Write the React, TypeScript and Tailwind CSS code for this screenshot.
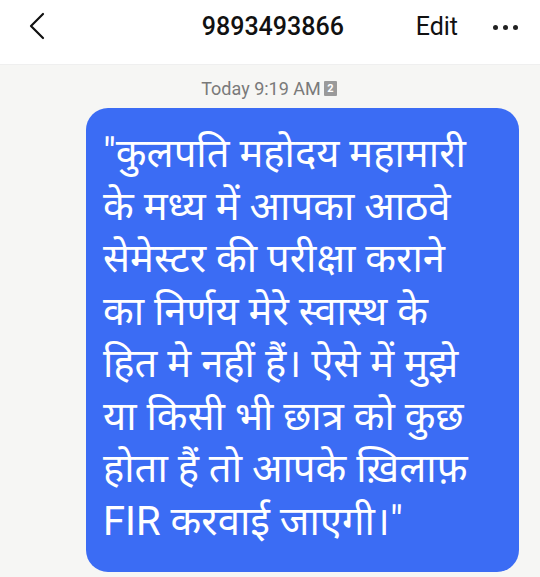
import React from "react";

const lines = [
  "\"कुलपति महोदय महामारी",
  "के मध्य में आपका आठवे",
  "सेमेस्टर की परीक्षा कराने",
  "का निर्णय मेरे स्वास्थ के",
  "हित मे नहीं हैं। ऐसे में मुझे",
  "या किसी भी छात्र को कुछ",
  "होता हैं तो आपके ख़िलाफ़",
  "FIR करवाई जाएगी।\"",
];

export default function App() {
  return (
    <div className="w-[540px] h-[577px] flex flex-col bg-[#f6f6f4] overflow-hidden" style={{ fontFamily: "Roboto, 'Noto Sans', 'Noto Sans Devanagari', sans-serif" }}>
      <div className="h-[65px] bg-white flex items-start pt-[11px] shrink-0 border-b border-[#efefef]">
        <div className="w-[70px] flex justify-center pl-[4px] pt-[1px]">
          <svg width="20" height="28" viewBox="0 0 20 28">
            <path d="M16 2 L4 14 L16 26" fill="none" stroke="#111" strokeWidth="2.2" strokeLinecap="round" strokeLinejoin="round" />
          </svg>
        </div>
        <div className="flex-1 text-center text-[25px] leading-[32px] font-medium text-[#111] pl-[60px]">9893493866</div>
        <div className="text-[25px] leading-[32px] text-[#111] mr-[35px]">Edit</div>
        <div className="flex gap-[5px] mr-[22px] mt-[14px]">
          <span className="w-[5px] h-[5px] rounded-full bg-[#222]" />
          <span className="w-[5px] h-[5px] rounded-full bg-[#222]" />
          <span className="w-[5px] h-[5px] rounded-full bg-[#222]" />
        </div>
      </div>
      <div className="flex justify-center items-center h-[43px] pt-[4px] pr-[2px] gap-[3px] text-[18px] text-[#7a7a7a]">
        <span>Today 9:19 AM</span>
        <span className="w-[13px] h-[15px] bg-[#9a9a9a] text-white text-[11px] leading-[15px] text-center font-bold rounded-[1px]">2</span>
      </div>
      <div className="flex justify-end pr-[21px]">
        <div className="w-[433px] h-[464px] bg-[#3b6cf4] rounded-[22px] pl-[17px] pt-[20px] text-white text-[40px] leading-[52.5px]">
          {lines.map((l, i) => (
            <div key={i} className="whitespace-nowrap">{l}</div>
          ))}
        </div>
      </div>
    </div>
  );
}
